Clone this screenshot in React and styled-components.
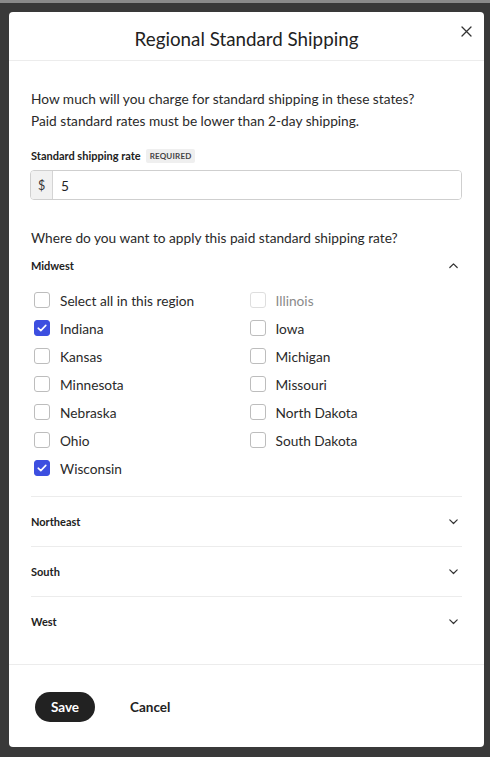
import React, { useState } from 'react';
import styled, { createGlobalStyle } from 'styled-components';

const GlobalStyle = createGlobalStyle`
  html, body {
    margin: 0;
    padding: 0;
    background: #393939;
  }
  body {
    font-family: Lato, "Open Sans", sans-serif;
    color: #222;
  }
`;

const Backdrop = styled.div`
  width: 490px;
  height: 757px;
  box-sizing: border-box;
  padding: 12px 6px 10px 9px;
  background: #393939;
  border-top: 3px solid #8a8a8a;
  display: flex;
`;

const Modal = styled.div`
  flex: 1;
  background: #fff;
  border-radius: 4px;
  display: flex;
  flex-direction: column;
  position: relative;
  margin-top: -3px;
`;

const Header = styled.div`
  height: 51px;
  box-sizing: border-box;
  padding-top: 4px;
  display: flex;
  align-items: center;
  justify-content: center;
  border-bottom: 1px solid #ececec;
`;

const Title = styled.h2`
  margin: 0;
  font-size: 18.8px;
  font-weight: 400;
  color: #222;
`;

const CloseButton = styled.button`
  position: absolute;
  top: 10px;
  right: 9px;
  width: 18px;
  height: 18px;
  padding: 0;
  border: none;
  background: none;
  display: flex;
  align-items: center;
  justify-content: center;
`;

const Body = styled.div`
  flex: 1;
  padding: 27px 22px 18px 22px;
  border-bottom: 1px solid #ececec;
`;

const Intro = styled.p`
  margin: 0;
  font-size: 13.7px;
  line-height: 22px;
  color: #2a2a2a;
`;

const FieldLabel = styled.div`
  margin-top: 16px;
  display: flex;
  align-items: center;
  gap: 5px;
  font-size: 11px;
  font-weight: 700;
  line-height: 16px;
  color: #222;
`;

const Badge = styled.span`
  background: #efefef;
  color: #444;
  font-size: 8px;
  font-weight: 700;
  letter-spacing: 0.2px;
  padding: 1px 4px;
  border-radius: 2px;
  line-height: 12px;
`;

const InputGroup = styled.div`
  margin-top: 6px;
  height: 30px;
  box-sizing: border-box;
  border: 1px solid #cfcfcf;
  border-radius: 4px;
  display: flex;
  overflow: hidden;
  margin-left: -1px;
`;

const Prefix = styled.span`
  width: 21px;
  background: #f1f1f1;
  border-right: 1px solid #d4d4d4;
  display: flex;
  align-items: center;
  justify-content: center;
  font-size: 12.5px;
  color: #333;
`;

const TextInput = styled.input`
  flex: 1;
  border: none;
  outline: none;
  padding: 0 8px;
  font-family: inherit;
  font-size: 13.7px;
  color: #222;
`;

const Question = styled(Intro)`
  margin-top: 27px;
`;

const Section = styled.div`
  border-top: ${(p) => (p.$first ? 'none' : '1px solid #ececec')};
`;

const SectionHeader = styled.div`
  height: ${(p) => (p.$first ? '32px' : '49px')};
  display: flex;
  align-items: center;
  justify-content: space-between;
  font-size: 11px;
  font-weight: 700;
  color: #222;
  padding-right: 4px;
`;

const StateGrid = styled.div`
  margin-top: 5px;
  padding-bottom: 14px;
  display: grid;
  grid-template-columns: 1fr 1fr;
  grid-auto-flow: column;
  grid-template-rows: repeat(7, 28px);
`;

const CheckRow = styled.label`
  display: flex;
  align-items: center;
  gap: 10px;
  padding-left: 3px;
  font-size: 13.7px;
  color: ${(p) => (p.$disabled ? '#8a8a8a' : '#2a2a2a')};
`;

const Box = styled.span`
  width: 16px;
  height: 16px;
  box-sizing: border-box;
  border-radius: 3px;
  border: 1px solid ${(p) => (p.$checked ? '#3d4fe0' : p.$disabled ? '#dedede' : '#bdbdbd')};
  background: ${(p) => (p.$checked ? '#3d4fe0' : '#fff')};
  display: flex;
  align-items: center;
  justify-content: center;
`;

const Footer = styled.div`
  height: 83px;
  display: flex;
  align-items: center;
  padding: 2px 26px 0;
  gap: 35px;
`;

const SaveButton = styled.button`
  height: 30px;
  width: 60px;
  border: none;
  border-radius: 15px;
  background: #222;
  color: #fff;
  font-family: inherit;
  font-size: 13.5px;
  font-weight: 700;
`;

const CancelButton = styled.button`
  border: none;
  background: none;
  padding: 0;
  font-family: inherit;
  font-size: 13.5px;
  font-weight: 700;
  color: #222;
`;

const Chevron = ({ up }) => (
  <svg width="9" height="5" viewBox="0 0 9 5" fill="none" style={{ overflow: 'visible' }}>
    <path
      d={up ? 'M0.8 4.5L4.5 0.8L8.2 4.5' : 'M0.8 0.8L4.5 4.5L8.2 0.8'}
      stroke="#333"
      strokeWidth="1.2"
      strokeLinecap="round"
      strokeLinejoin="round"
    />
  </svg>
);

const Check = () => (
  <svg width="10" height="8" viewBox="0 0 10 8" fill="none">
    <path d="M1.2 4.2L3.8 6.6L8.8 1.4" stroke="#fff" strokeWidth="1.6" strokeLinecap="round" strokeLinejoin="round" />
  </svg>
);

const midwest = [
  { name: 'Select all in this region' },
  { name: 'Indiana', checked: true },
  { name: 'Kansas' },
  { name: 'Minnesota' },
  { name: 'Nebraska' },
  { name: 'Ohio' },
  { name: 'Wisconsin', checked: true },
  { name: 'Illinois', disabled: true },
  { name: 'Iowa' },
  { name: 'Michigan' },
  { name: 'Missouri' },
  { name: 'North Dakota' },
  { name: 'South Dakota' },
];

export default function App() {
  const [rate, setRate] = useState('5');

  return (
    <>
      <GlobalStyle />
      <Backdrop>
        <Modal>
          <Header>
            <Title>Regional Standard Shipping</Title>
          </Header>
          <CloseButton aria-label="Close">
            <svg width="11" height="11" viewBox="0 0 11 11">
              <path d="M1 1L10 10M10 1L1 10" stroke="#333" strokeWidth="1.3" strokeLinecap="round" />
            </svg>
          </CloseButton>
          <Body>
            <Intro>
              How much will you charge for standard shipping in these states?
              <br />
              Paid standard rates must be lower than 2-day shipping.
            </Intro>
            <FieldLabel>
              Standard shipping rate <Badge>REQUIRED</Badge>
            </FieldLabel>
            <InputGroup>
              <Prefix>$</Prefix>
              <TextInput value={rate} onChange={(e) => setRate(e.target.value)} />
            </InputGroup>
            <Question>Where do you want to apply this paid standard shipping rate?</Question>

            <Section $first>
              <SectionHeader $first>
                Midwest
                <Chevron up />
              </SectionHeader>
              <StateGrid>
                {midwest.map((s) => (
                  <CheckRow key={s.name} $disabled={s.disabled}>
                    <Box $checked={s.checked} $disabled={s.disabled}>
                      {s.checked && <Check />}
                    </Box>
                    {s.name}
                  </CheckRow>
                ))}
              </StateGrid>
            </Section>
            {['Northeast', 'South', 'West'].map((r) => (
              <Section key={r}>
                <SectionHeader>
                  {r}
                  <Chevron />
                </SectionHeader>
              </Section>
            ))}
          </Body>
          <Footer>
            <SaveButton>Save</SaveButton>
            <CancelButton>Cancel</CancelButton>
          </Footer>
        </Modal>
      </Backdrop>
    </>
  );
}
